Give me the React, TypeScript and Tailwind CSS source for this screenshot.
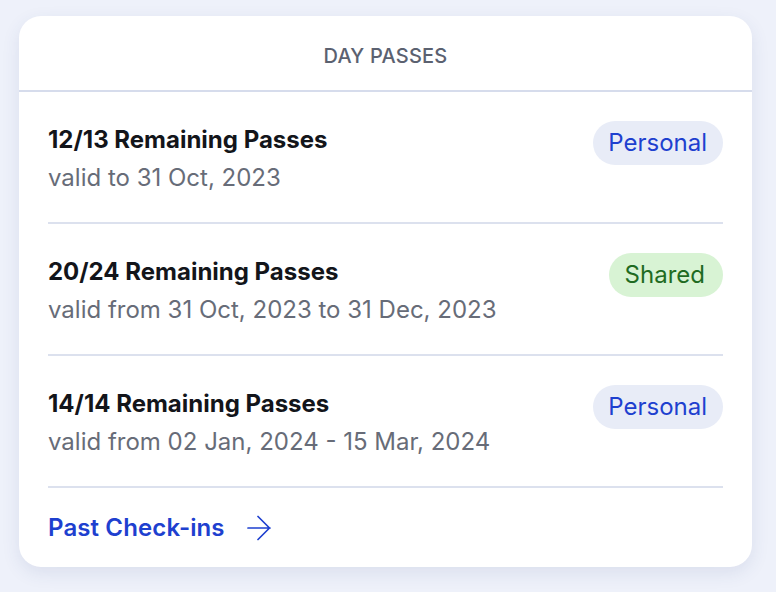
const passes = [
  { title: "12/13 Remaining Passes", valid: "valid to 31 Oct, 2023", type: "Personal" },
  { title: "20/24 Remaining Passes", valid: "valid from 31 Oct, 2023 to 31 Dec, 2023", type: "Shared" },
  { title: "14/14 Remaining Passes", valid: "valid from 02 Jan, 2024 - 15 Mar, 2024", type: "Personal" },
];

function Badge({ type }: { type: string }) {
  if (type === "Shared") {
    return (
      <span className="flex h-[44px] items-center rounded-full bg-[#d8f3d4] pl-[16px] pr-[18px] text-[24px] text-[#1f6b22]">
        Shared
      </span>
    );
  }
  return (
    <span className="flex h-[44px] items-center rounded-full bg-[#e8ecf7] pl-[15px] pr-[16px] text-[24px] text-[#1e40cf]">
      Personal
    </span>
  );
}

function Arrow() {
  return (
    <svg width="24" height="26" viewBox="0 0 24 26" fill="none" stroke="currentColor" strokeWidth="1.7" strokeLinecap="round" strokeLinejoin="round">
      <path d="M1 13h22M11 1.5 22.5 13 11 24.5" />
    </svg>
  );
}

export default function App() {
  return (
    <div
      className="min-h-[592px] bg-[#eef1fa] pl-[19px] pt-[16px]"
      style={{ fontFamily: "Inter, 'Noto Sans', sans-serif" }}
    >
      <div className="w-[733px] rounded-[22px] bg-white shadow-[0_6px_18px_rgba(50,70,130,0.10)]">
        <div className="flex h-[76px] items-center justify-center border-b-2 border-[#d6dcec] pt-[5px] text-[20px] font-medium tracking-[0.01em] text-[#5b6170]">
          DAY PASSES
        </div>

        <div className="px-[29px]">
          {passes.map((p) => (
            <div
              key={p.title}
              className="flex items-start justify-between border-b-2 border-[#dce1ee] pb-[25px] pt-[29px]"
            >
              <div>
                <p className="text-[24px] font-bold leading-[38px] text-[#13151a]">{p.title}</p>
                <p className="text-[24px] leading-[38px] text-[#676c78]">{p.valid}</p>
              </div>
              <Badge type={p.type} />
            </div>
          ))}

          <a
            href="#"
            className="flex items-center gap-[22px] pb-[24px] pt-[25px] text-[24px] font-semibold leading-[30px] tracking-[0.005em] text-[#1e40cf]"
          >
            Past Check-ins
            <Arrow />
          </a>
        </div>
      </div>
    </div>
  );
}
